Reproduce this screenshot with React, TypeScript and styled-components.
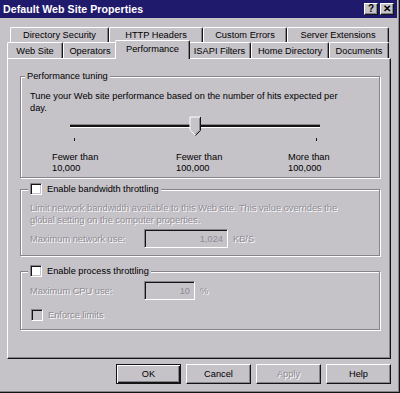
import styled, { createGlobalStyle } from "styled-components";

const face = "#c5c2c8";
const shadow = "#86838a";
const dark = "#141414";
const hilite = "#ffffff";
const grayText = "#8f8c93";

const GlobalStyle = createGlobalStyle`
  * { box-sizing: border-box; }
  body {
    margin: 0;
    background: ${face};
  }
`;

const Window = styled.div`
  width: 400px;
  height: 393px;
  display: flex;
  flex-direction: column;
  background: ${face};
  font-family: "Liberation Sans", Arial, sans-serif;
  font-size: 9.25px;
  color: #000;
  border-right: 1px solid ${dark};
  border-bottom: 1px solid ${dark};
  box-shadow: inset -1px -1px 0 ${shadow};
  overflow: hidden;
`;

const TitleBar = styled.div`
  height: 18px;
  margin-right: 2px;
  padding: 0 3px 0 3px;
  display: flex;
  align-items: center;
  justify-content: space-between;
  background: #1f1a6c;
`;

const Title = styled.span`
  color: #fff;
  font-weight: bold;
  font-size: 10.6px;
  letter-spacing: 0.05px;
`;

const CaptionButtons = styled.div`
  display: flex;
  gap: 2px;
`;

const CaptionButton = styled.div`
  width: 14px;
  height: 12px;
  display: flex;
  align-items: center;
  justify-content: center;
  background: ${face};
  border-top: 1px solid ${hilite};
  border-left: 1px solid ${hilite};
  border-right: 1px solid ${dark};
  border-bottom: 1px solid ${dark};
  box-shadow: inset -1px -1px 0 ${shadow};
  font-weight: bold;
  font-size: 10px;
  line-height: 1;
  color: #000;
`;

const TabStrip = styled.div`
  margin-top: 9px;
  display: flex;
  flex-direction: column;
`;

const TabRow = styled.div<{ $indent: number }>`
  display: flex;
  padding-left: ${(p) => p.$indent}px;
`;

const Tab = styled.div<{ $w: number; $h: number; $active?: boolean }>`
  position: relative;
  width: ${(p) => p.$w + (p.$active ? 4 : 0)}px;
  height: ${(p) => p.$h + (p.$active ? 3 : 0)}px;
  margin: ${(p) => (p.$active ? "-2px -2px -1px -2px" : "0")};
  z-index: ${(p) => (p.$active ? 2 : 1)};
  display: flex;
  align-items: center;
  justify-content: center;
  padding-bottom: ${(p) => (p.$active ? 2 : 0)}px;
  background: ${face};
  border-top: 1px solid ${hilite};
  border-left: 1px solid ${hilite};
  border-right: 1px solid ${dark};
  border-radius: 2px 2px 0 0;
  box-shadow: inset -1px 0 0 ${shadow};
  white-space: nowrap;
`;

const Panel = styled.div`
  margin: 0 8px 0 7px;
  height: 301px;
  padding: 0 10px 0 12px;
  display: flex;
  flex-direction: column;
  background: ${face};
  border-top: 1px solid ${hilite};
  border-left: 1px solid ${hilite};
  border-right: 1px solid ${dark};
  border-bottom: 1px solid ${dark};
  box-shadow: inset -1px -1px 0 ${shadow};
`;

const Group = styled.fieldset<{ $top: number; $pt: number; $pb: number }>`
  margin: ${(p) => p.$top}px 0 0 0;
  padding: ${(p) => p.$pt}px 9px ${(p) => p.$pb}px 9px;
  border: 1px solid ${shadow};
  box-shadow: inset 1px 1px 0 ${hilite}, 1px 1px 0 ${hilite};
  min-width: 0;
`;

const Legend = styled.legend<{ $shift: number }>`
  margin-left: ${(p) => p.$shift}px;
  padding: 0 2px;
  background: ${face};
  display: flex;
  align-items: center;
  gap: 5px;
  height: 12px;
  line-height: 12px;
`;

const Text = styled.p<{ $disabled?: boolean }>`
  margin: 0;
  line-height: 12px;
  color: ${(p) => (p.$disabled ? grayText : "#000")};
  text-shadow: ${(p) => (p.$disabled ? `1px 1px 0 ${hilite}` : "none")};
`;

const Ticks = styled.div`
  height: 38px;
`;

const TickLabels = styled.div`
  display: grid;
  grid-template-columns: 124px 112px 1fr;
  padding-left: 22px;
  line-height: 11px;
`;

const FieldRow = styled.div<{ $mt: number }>`
  margin-top: ${(p) => p.$mt}px;
  display: flex;
  align-items: center;
`;

const FieldLabel = styled(Text)`
  width: 114px;
`;

const Field = styled.div<{ $w: number }>`
  width: ${(p) => p.$w}px;
  height: 19px;
  padding: 0 4px;
  display: flex;
  align-items: center;
  justify-content: flex-end;
  background: ${face};
  color: ${grayText};
  border-top: 1px solid ${shadow};
  border-left: 1px solid ${shadow};
  border-right: 1px solid ${hilite};
  border-bottom: 1px solid ${hilite};
  box-shadow: inset 1px 1px 0 ${dark}, inset -1px -1px 0 ${face};
`;

const Unit = styled(Text)`
  margin-left: 5px;
`;

const Check = styled.span<{ $disabled?: boolean }>`
  width: 12px;
  height: 12px;
  flex: none;
  background: ${(p) => (p.$disabled ? face : "#fff")};
  border-top: 1px solid ${shadow};
  border-left: 1px solid ${shadow};
  border-right: 1px solid ${hilite};
  border-bottom: 1px solid ${hilite};
  box-shadow: inset 1px 1px 0 ${dark}, inset -1px -1px 0 ${face};
`;

const CheckRow = styled.div<{ $mt: number }>`
  margin-top: ${(p) => p.$mt}px;
  margin-left: 1px;
  display: flex;
  align-items: center;
  gap: 5px;
`;

const ButtonBar = styled.div`
  margin-top: 5px;
  padding-right: 8px;
  display: flex;
  justify-content: flex-end;
  gap: 5px;
`;

const Button = styled.div<{ $default?: boolean; $disabled?: boolean }>`
  width: 65px;
  height: 20px;
  display: flex;
  align-items: center;
  justify-content: center;
  background: ${face};
  color: ${(p) => (p.$disabled ? grayText : "#000")};
  text-shadow: ${(p) => (p.$disabled ? `1px 1px 0 ${hilite}` : "none")};
  border-top: 1px solid ${(p) => (p.$default ? dark : hilite)};
  border-left: 1px solid ${(p) => (p.$default ? dark : hilite)};
  border-right: 1px solid ${dark};
  border-bottom: 1px solid ${dark};
  box-shadow: ${(p) =>
    p.$default
      ? `inset 1px 1px 0 ${hilite}, inset -1px -1px 0 ${dark}, inset -2px -2px 0 ${shadow}`
      : `inset -1px -1px 0 ${shadow}`};
`;

const backTabs = [
  { label: "Directory Security", w: 99 },
  { label: "HTTP Headers", w: 94 },
  { label: "Custom Errors", w: 84 },
  { label: "Server Extensions", w: 102 },
];

const frontTabs = [
  { label: "Web Site", w: 56 },
  { label: "Operators", w: 54 },
  { label: "Performance", w: 71, active: true },
  { label: "ISAPI Filters", w: 63 },
  { label: "Home Directory", w: 78 },
  { label: "Documents", w: 60 },
];

function TuningSlider() {
  // track 40..290, thumb at 165, relative to group content
  return (
    <Ticks>
      <svg width="342" height="38" viewBox="0 0 342 38">
        <rect x="40" y="10" width="250" height="1" fill={shadow} />
        <rect x="40" y="11" width="250" height="2" fill={dark} />
        <rect x="40" y="13" width="250" height="1" fill={hilite} />
        <rect x="44" y="24" width="1" height="3" fill={dark} />
        <rect x="286" y="24" width="1" height="3" fill={dark} />
        <polygon points="160,3 170,3 170,16 165,21 160,16" fill={face} />
        <polyline points="160,16 160,3 170,3" fill="none" stroke={hilite} strokeWidth="1" />
        <polyline points="170.5,3 170.5,16.5 165.5,21.5" fill="none" stroke={dark} strokeWidth="1" />
        <polyline points="169.5,4 169.5,16 165,20.5" fill="none" stroke={shadow} strokeWidth="1" />
        <line x1="160.5" y1="16.5" x2="165" y2="21" stroke={hilite} strokeWidth="1" />
      </svg>
    </Ticks>
  );
}

export default function App() {
  return (
    <>
      <GlobalStyle />
      <Window>
        <TitleBar>
          <Title>Default Web Site Properties</Title>
          <CaptionButtons>
            <CaptionButton>?</CaptionButton>
            <CaptionButton>✕</CaptionButton>
          </CaptionButtons>
        </TitleBar>

        <TabStrip>
          <TabRow $indent={10}>
            {backTabs.map((t) => (
              <Tab key={t.label} $w={t.w} $h={15}>
                {t.label}
              </Tab>
            ))}
          </TabRow>
          <TabRow $indent={7}>
            {frontTabs.map((t) => (
              <Tab key={t.label} $w={t.w} $h={16} $active={t.active}>
                {t.label}
              </Tab>
            ))}
          </TabRow>
        </TabStrip>

        <Panel>
          <Group $top={11} $pt={8} $pb={3}>
            <Legend $shift={-5}>Performance tuning</Legend>
            <Text>
              Tune your Web site performance based on the number of hits expected per
              <br />
              day.
            </Text>
            <TuningSlider />
            <TickLabels>
              <span>
                Fewer than
                <br />
                10,000
              </span>
              <span>
                Fewer than
                <br />
                100,000
              </span>
              <span>
                More than
                <br />
                100,000
              </span>
            </TickLabels>
          </Group>

          <Group $top={5} $pt={7} $pb={7}>
            <Legend $shift={-2}>
              <Check />
              Enable bandwidth throttling
            </Legend>
            <Text $disabled>
              Limit network bandwidth available to this Web site. This value overrides the
              <br />
              global setting on the computer properties.
            </Text>
            <FieldRow $mt={3}>
              <FieldLabel $disabled>Maximum network use:</FieldLabel>
              <Field $w={84}>1,024</Field>
              <Unit $disabled>KB/S</Unit>
            </FieldRow>
          </Group>

          <Group $top={9} $pt={4} $pb={8}>
            <Legend $shift={-2}>
              <Check />
              Enable process throttling
            </Legend>
            <FieldRow $mt={0}>
              <FieldLabel $disabled>Maximum CPU use:</FieldLabel>
              <Field $w={51}>10</Field>
              <Unit $disabled>%</Unit>
            </FieldRow>
            <CheckRow $mt={9}>
              <Check $disabled />
              <Text $disabled>Enforce limits</Text>
            </CheckRow>
          </Group>
        </Panel>

        <ButtonBar>
          <Button $default>OK</Button>
          <Button>Cancel</Button>
          <Button $disabled>Apply</Button>
          <Button>Help</Button>
        </ButtonBar>
      </Window>
    </>
  );
}
